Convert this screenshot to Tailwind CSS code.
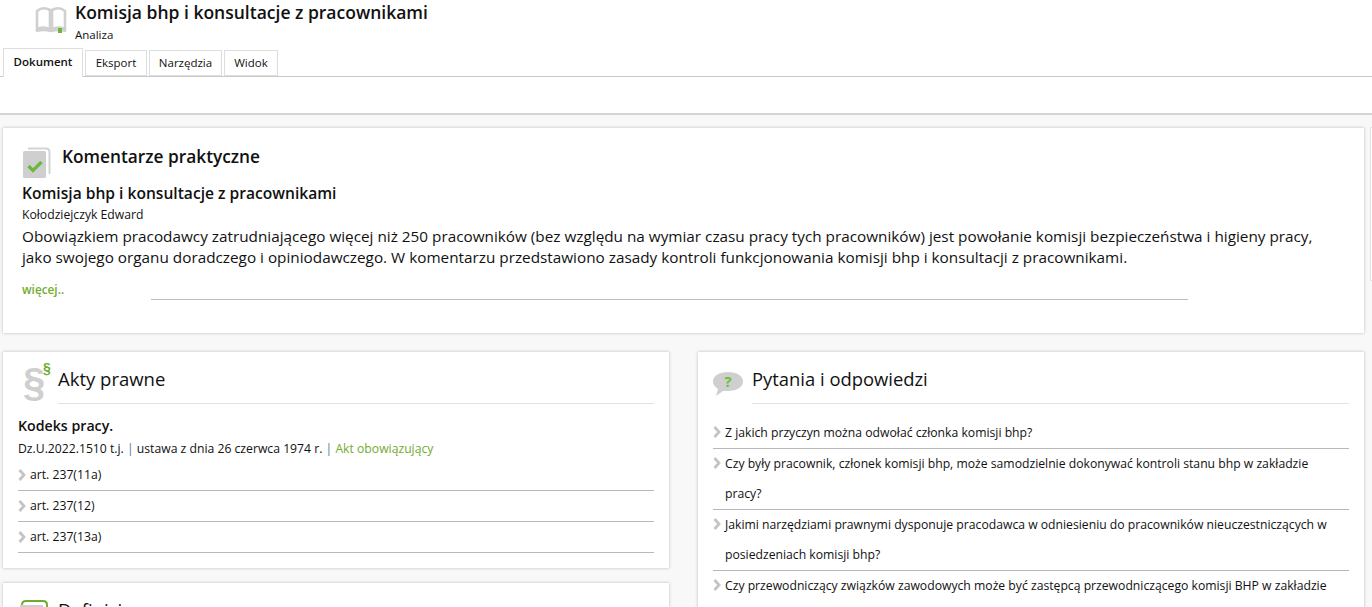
<!DOCTYPE html>
<html lang="pl">
<head>
<meta charset="UTF-8">
<title>Komisja bhp i konsultacje z pracownikami</title>
<script src="https://cdn.jsdelivr.net/npm/@tailwindcss/browser@4"></script>
</head>
<body class="h-[607px] overflow-hidden bg-[#f8f8f8] font-['Open_Sans',sans-serif] text-[#111]">
  <!-- header -->
  <header class="h-[115px] bg-white border-b-2 border-[#d4d4d4]">
    <div class="flex h-[47px]">
      <svg class="ml-[35px] mt-[6px] w-[32px] h-[28px] shrink-0" viewBox="0 0 32 28">
        <path d="M2 5 Q8 0 15 4 V23 Q8 20 2 23 Z M17 4 Q24 0 30 5 V23 Q24 20 17 23 Z" fill="none" stroke="#d0d0d0" stroke-width="2.6"/>
        <path d="M1 25 Q9 23 16 25 Q23 23 31 25" fill="none" stroke="#d0d0d0" stroke-width="2.4"/>
        <rect x="23" y="22" width="4" height="5" fill="#6cb83f"/>
      </svg>
      <div class="ml-[8px]">
        <h1 class="text-[17.5px] leading-[24px] font-semibold">Komisja bhp i konsultacje z pracownikami</h1>
        <p class="text-[11.5px] leading-[16px] mt-[3px]">Analiza</p>
      </div>
    </div>
    <nav class="flex items-end gap-[2px] pl-[3px] h-[30px] border-b border-[#c9c9c9] text-[11.5px]">
      <a class="h-[29px] w-[80px] -mb-px bg-white border border-b-0 border-[#dedede] font-semibold flex items-center justify-center pb-[2px]">Dokument</a>
      <a class="h-[26px] w-[62px] border border-[#dedede] flex items-center justify-center">Eksport</a>
      <a class="h-[26px] w-[73px] border border-[#dedede] flex items-center justify-center">Narzędzia</a>
      <a class="h-[26px] w-[54px] border border-[#dedede] flex items-center justify-center">Widok</a>
    </nav>
  </header>

  <main class="relative px-[3px] pt-[13px]">
    <!-- next card, only its edge fits in the window -->
    <div class="absolute left-[1370px] top-[12px] w-[10px] h-[154px] bg-white border border-[#e2e2e2]"></div>

    <section class="w-[1361px] h-[205px] bg-white shadow-[0_0_3px_#bbb] px-[19px] pt-[19px]">
      <div class="flex h-[31px]">
        <svg class="w-[29px] h-[31px] shrink-0" viewBox="0 0 29 31">
          <path d="M6 1.5 H24 Q27.5 1.5 27.5 5 V27" fill="none" stroke="#d4d4d4" stroke-width="2"/>
          <rect x="1" y="4" width="23" height="27" rx="1.5" fill="#cfcfcf"/>
          <path d="M6.5 19 L11 23.5 L19.5 15" fill="none" stroke="#6cb83f" stroke-width="3.2"/>
        </svg>
        <h2 class="ml-[11px] text-[17.3px] leading-[20px] font-semibold">Komentarze praktyczne</h2>
      </div>
      <h3 class="text-[15.6px] leading-[20px] font-semibold mt-[5px]">Komisja bhp i konsultacje z pracownikami</h3>
      <p class="text-[12.2px] leading-[16px] mt-[4px]">Kołodziejczyk Edward</p>
      <p class="text-[15.3px] leading-[21px] mt-[3px] w-[1300px]">Obowiązkiem pracodawcy zatrudniającego więcej niż 250 pracowników (bez względu na wymiar czasu pracy tych pracowników) jest powołanie komisji bezpieczeństwa i higieny pracy, jako swojego organu doradczego i opiniodawczego. W komentarzu przedstawiono zasady kontroli funkcjonowania komisji bhp i konsultacji z pracownikami.</p>
      <div class="flex mt-[13px]">
        <a class="text-[11.8px] leading-[16px] font-semibold text-[#72ab2f] w-[129px]">więcej..</a>
        <div class="w-[1037px] h-px bg-[#bdbdbd] mt-[18px]"></div>
      </div>
    </section>

    <div class="flex gap-[29px] mt-[19px]">
      <div class="w-[666px] shrink-0">
        <section class="h-[216px] bg-white shadow-[0_0_3px_#bbb] px-[15px]">
          <div class="flex h-[52px]">
            <div class="relative w-[40px] shrink-0">
              <span class="absolute left-[5px] top-[7px] text-[#cfcfcf] text-[40px] leading-[46px] font-bold font-['Liberation_Sans',sans-serif]">§</span>
              <span class="absolute left-[25px] top-[7px] text-[#72ab2f] text-[14px] leading-[18px] font-bold font-['Liberation_Sans',sans-serif]">§</span>
            </div>
            <h2 class="flex-1 border-b border-[#e2e2e2] text-[18.5px] leading-[24px] pt-[15px]">Akty prawne</h2>
          </div>
          <h3 class="text-[14.2px] leading-[20px] font-semibold mt-[12px]">Kodeks pracy.</h3>
          <p class="text-[12.2px] leading-[16px] mt-[5px]">Dz.U.2022.1510 t.j. <span class="text-[#4a7a9c]">|</span> ustawa z dnia 26 czerwca 1974 r. <span class="text-[#4a7a9c]">|</span> <span class="text-[#72ab2f]">Akt obowiązujący</span></p>
          <ul class="text-[12.2px] mt-[3px]">
            <li class="flex items-center h-[31px] border-b border-[#b8b8b8]">
              <svg class="w-[8px] h-[12px] mr-[4px]" viewBox="0 0 8 12"><path d="M1.5 1 L6 6 L1.5 11" fill="none" stroke="#c4c4c4" stroke-width="2.8"/></svg>art. 237(11a)
            </li>
            <li class="flex items-center h-[31px] border-b border-[#b8b8b8]">
              <svg class="w-[8px] h-[12px] mr-[4px]" viewBox="0 0 8 12"><path d="M1.5 1 L6 6 L1.5 11" fill="none" stroke="#c4c4c4" stroke-width="2.8"/></svg>art. 237(12)
            </li>
            <li class="flex items-center h-[31px] border-b border-[#b8b8b8]">
              <svg class="w-[8px] h-[12px] mr-[4px]" viewBox="0 0 8 12"><path d="M1.5 1 L6 6 L1.5 11" fill="none" stroke="#c4c4c4" stroke-width="2.8"/></svg>art. 237(13a)
            </li>
          </ul>
        </section>
        <section class="h-[60px] mt-[15px] bg-white shadow-[0_0_3px_#bbb] px-[17px] flex">
          <svg class="w-[28px] h-[30px] mt-[17px] shrink-0" viewBox="0 0 28 30">
            <path d="M2 8 V5 Q2 1 6 1 H23 Q27 1 27 5 V8" fill="none" stroke="#72ab2f" stroke-width="2"/>
            <rect x="0" y="5" width="23" height="25" fill="#cfcfcf"/>
          </svg>
          <h2 class="ml-[10px] text-[18.5px] leading-[24px] pt-[15px]">Definicje</h2>
        </section>
      </div>

      <section class="w-[666px] shrink-0 h-[300px] bg-white shadow-[0_0_3px_#bbb] px-[15px]">
        <div class="flex h-[52px]">
          <svg class="w-[31px] h-[25px] mt-[19px] shrink-0" viewBox="0 0 31 25">
            <path d="M15 1 C24 1 30 5 30 10.5 C30 16 24 20 15 20 H10 L3 25 L5 18 C2 16 0 14 0 10.5 C0 5 6 1 15 1 Z" fill="#cfcfcf"/>
            <text x="15" y="16" text-anchor="middle" font-size="15" font-weight="700" fill="#6cc02f" font-family="Open Sans">?</text>
          </svg>
          <h2 class="ml-[8px] flex-1 border-b border-[#e2e2e2] text-[18.4px] leading-[24px] pt-[15px]">Pytania i odpowiedzi</h2>
        </div>
        <ul class="text-[12.2px] leading-[30px] mt-[14px]">
          <li class="flex items-start border-b border-[#b8b8b8]">
            <svg class="w-[8px] h-[12px] mr-[4px] mt-[8px] shrink-0" viewBox="0 0 8 12"><path d="M1.5 1 L6 6 L1.5 11" fill="none" stroke="#c4c4c4" stroke-width="2.8"/></svg><span class="max-w-[610px]">Z jakich przyczyn można odwołać członka komisji bhp?</span>
          </li>
          <li class="flex items-start border-b border-[#b8b8b8]">
            <svg class="w-[8px] h-[12px] mr-[4px] mt-[8px] shrink-0" viewBox="0 0 8 12"><path d="M1.5 1 L6 6 L1.5 11" fill="none" stroke="#c4c4c4" stroke-width="2.8"/></svg><span class="max-w-[610px]">Czy były pracownik, członek komisji bhp, może samodzielnie dokonywać kontroli stanu bhp w zakładzie pracy?</span>
          </li>
          <li class="flex items-start border-b border-[#b8b8b8]">
            <svg class="w-[8px] h-[12px] mr-[4px] mt-[8px] shrink-0" viewBox="0 0 8 12"><path d="M1.5 1 L6 6 L1.5 11" fill="none" stroke="#c4c4c4" stroke-width="2.8"/></svg><span class="max-w-[610px]">Jakimi narzędziami prawnymi dysponuje pracodawca w odniesieniu do pracowników nieuczestniczących w posiedzeniach komisji bhp?</span>
          </li>
          <li class="flex items-start">
            <svg class="w-[8px] h-[12px] mr-[4px] mt-[8px] shrink-0" viewBox="0 0 8 12"><path d="M1.5 1 L6 6 L1.5 11" fill="none" stroke="#c4c4c4" stroke-width="2.8"/></svg><span class="max-w-[610px]">Czy przewodniczący związków zawodowych może być zastępcą przewodniczącego komisji BHP w zakładzie pracy?</span>
          </li>
        </ul>
      </section>
    </div>
  </main>
</body>
</html>
